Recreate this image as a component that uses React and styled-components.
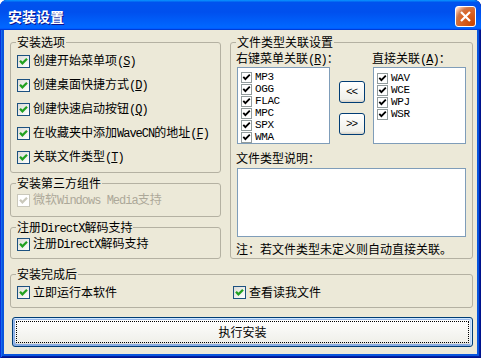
import React from "react"
import styled, { createGlobalStyle } from "styled-components"

const GlobalStyle = createGlobalStyle`
  *, *::before, *::after { box-sizing: border-box; }
  html, body { margin: 0; padding: 0; background: #fff; }
  body {
    font-family: "Noto Sans CJK SC", "Liberation Sans", sans-serif;
    font-size: 12px;
    color: #000;
  }
`

const Window = styled.div`
  width: 481px;
  height: 358px;
  display: flex;
  flex-direction: column;
  background: #0855dd;
  border-radius: 7px 7px 0 0;
  overflow: hidden;
  box-shadow: inset 1px 0 #0831d9, inset -1px 0 #00138c, inset 0 -1px #00138c,
    inset 2px 0 #166aee, inset -2px 0 #001ea0, inset 0 -2px #001ea0;
`

const TitleBar = styled.div`
  height: 30px;
  flex: none;
  display: flex;
  align-items: center;
  justify-content: space-between;
  padding: 2px 5px 0 8px;
  background: linear-gradient(180deg, #0997ff, #0053ee 8%, #0050ee 40%, #0066ff 88%, #0066ff 93%, #005bff 95%, #003dd7 96%, #003dd7);
`

const Title = styled.span`
  color: #fff;
  font-weight: bold;
  font-size: 14px;
  letter-spacing: 0;
  line-height: 14px;
  text-shadow: 1px 1px #0f1089;
`

const Close = styled.button`
  width: 21px;
  height: 21px;
  padding: 0;
  display: flex;
  align-items: center;
  justify-content: center;
  border: 1px solid #fff;
  border-radius: 3px;
  background: radial-gradient(circle at 90% 90%, #cc4600 0%, #dc6527 55%, #cd7546 70%, #ffccb2 90%, #fff 100%);
`

const Body = styled.div`
  flex: 1;
  margin: 0 4px 4px;
  padding: 6px 4px 7px 6px;
  background: #ece9d8;
  display: flex;
  flex-direction: column;
`

const TopRow = styled.div`
  display: grid;
  grid-template-columns: 211px 243px;
  column-gap: 9px;
`

const LeftCol = styled.div`
  display: flex;
  flex-direction: column;
  gap: 4px;
`

const Group = styled.fieldset`
  margin: 0;
  min-width: 0;
  padding: ${p => p.$pad || "0 6px 3px"};
  border: 1px solid #b4b1a2;
  border-radius: 3px;
`

const Legend = styled.legend`
  padding: 0 1px;
  margin-left: -1px;
  height: 12px;
  line-height: 12px;
  font-size: 12px;
`

const Row = styled.label`
  display: flex;
  align-items: center;
  gap: 3px;
  height: ${p => p.$h || 24}px;
  line-height: 12px;
  white-space: nowrap;
  color: ${p => (p.$disabled ? "#aca899" : "#000")};
`

const Stack = styled.div`
  padding-top: ${p => p.$top || 0}px;
`

const Box = styled.span`
  flex: none;
  width: 13px;
  height: 13px;
  display: flex;
  align-items: center;
  justify-content: center;
  border: 1px solid ${p => (p.$disabled ? "#cac8bb" : "#1c5180")};
  background: ${p => (p.$disabled ? "#fff" : "linear-gradient(135deg, #dcdcd7, #ffffff)")};
`

const Latin = styled.span`
  font-family: "Liberation Mono", monospace;
  font-size: 12px;
  letter-spacing: -1px;
`

const RightGroup = styled(Group)`
  display: flex;
  flex-direction: column;
`

const Assoc = styled.div`
  display: grid;
  grid-template-columns: 93px 43px 93px;
  grid-template-rows: 12px 77px;
  row-gap: 3px;
  margin-top: 4px;
`

const Caption = styled.div`
  height: 12px;
  line-height: 12px;
  white-space: nowrap;
  margin-top: ${p => p.$top || 0}px;
  margin-left: -1px;
`

const List = styled.div`
  background: #fff;
  border: 1px solid #7f9db9;
  padding: 4px 0 0 3px;
  display: flex;
  flex-direction: column;
`

const Item = styled.div`
  height: 12px;
  display: flex;
  align-items: center;
  gap: 3px;
`

const SmallBox = styled.span`
  flex: none;
  width: 11px;
  height: 11px;
  display: flex;
  align-items: center;
  justify-content: center;
  border: 1px solid #919b9c;
  background: #fff;
`

const ItemText = styled.span`
  font-family: "Liberation Mono", monospace;
  font-size: 11px;
  letter-spacing: -0.4px;
  line-height: 11px;
`

const Arrows = styled.div`
  display: flex;
  flex-direction: column;
  align-items: center;
  gap: 10px;
  padding-top: 14px;
`

const XpButton = styled.button`
  position: relative;
  width: ${p => p.$w || "auto"};
  height: ${p => p.$h}px;
  padding: 0;
  border: 1px solid #003c74;
  border-radius: 3px;
  background: linear-gradient(180deg, #ffffff, #f0f0ea 86%, #d6d0c5);
  color: #000;
  font-family: inherit;
  font-size: 12px;
  line-height: 12px;
  display: flex;
  align-items: center;
  justify-content: center;
`

const ArrowText = styled.span`
  font-family: "Liberation Mono", monospace;
  font-size: 11px;
  letter-spacing: -1px;
`

const Memo = styled.div`
  height: 69px;
  margin-top: 4px;
  background: #fff;
  border: 1px solid #7f9db9;
`

const BottomGroup = styled(Group)`
  margin-top: 9px;
`

const TwoCol = styled.div`
  display: grid;
  grid-template-columns: 216px 1fr;
`

const Install = styled(XpButton)`
  margin: 9px 0 0 2px;
  box-shadow: inset -1px 1px #cee7ff, inset 1px 2px #98b8ea, inset -2px 2px #bcd4f6,
    inset 1px -1px #89ade4, inset 2px -2px #89ade4;
  &::after {
    content: "";
    position: absolute;
    inset: 3px;
    border: 1px dotted #000;
    border-radius: 1px;
  }
`

// split out ASCII runs so they get the narrow mono face; "&X" marks an underlined accelerator
const text = s =>
  s.split(/([\x20-\x7e]+)/).map((part, i) => {
    if (!part) return null
    if (/^[\x20-\x7e]+$/.test(part)) {
      const bits = part.split(/&(.)/)
      return <Latin key={i}>{bits.map((b, j) => (j % 2 ? <u key={j}>{b}</u> : b))}</Latin>
    }
    return part
  })

const Check = ({ disabled }) => (
  <Box $disabled={disabled}>
    <svg width="11" height="11" viewBox="0 0 11 11">
      <path d="M2 4.8 L4.4 7.3 L9 2.7" fill="none" stroke={disabled ? "#cac8bb" : "#21a121"} strokeWidth="2.3" />
    </svg>
  </Box>
)

const CheckItem = ({ label, disabled, h }) => (
  <Row $disabled={disabled} $h={h}>
    <Check disabled={disabled} />
    <span>{text(label)}</span>
  </Row>
)

const FileList = ({ items }) => (
  <List>
    {items.map(it => (
      <Item key={it}>
        <SmallBox>
          <svg width="9" height="9" viewBox="0 0 9 9">
            <path d="M1.3 3.8 L3.4 6.2 L7.8 1.6" fill="none" stroke="#000" strokeWidth="1.8" />
          </svg>
        </SmallBox>
        <ItemText>{it}</ItemText>
      </Item>
    ))}
  </List>
)

const options = [
  "创建开始菜单项(&S)",
  "创建桌面快捷方式(&D)",
  "创建快速启动按钮(&Q)",
  "在收藏夹中添加WaveCN的地址(&F)",
  "关联文件类型(&T)",
]

export default function App() {
  return (
    <>
      <GlobalStyle />
      <Window>
        <TitleBar>
          <Title>安装设置</Title>
          <Close aria-label="关闭">
            <svg width="13" height="13" viewBox="0 0 13 13">
              <path d="M2 2 L11 11 M11 2 L2 11" stroke="#fff" strokeWidth="2.2" />
            </svg>
          </Close>
        </TitleBar>
        <Body>
          <TopRow>
            <LeftCol>
              <Group>
                <Legend>安装选项</Legend>
                <Stack $top={1}>
                  {options.map(o => (
                    <CheckItem key={o} label={o} />
                  ))}
                </Stack>
              </Group>
              <Group $pad="0 6px 5px">
                <Legend>安装第三方组件</Legend>
                <CheckItem label="微软Windows Media支持" disabled h={22} />
              </Group>
              <Group>
                <Legend>{text("注册DirectX解码支持")}</Legend>
                <CheckItem label="注册DirectX解码支持" h={22} />
              </Group>
            </LeftCol>
            <RightGroup>
              <Legend>文件类型关联设置</Legend>
              <Assoc>
                <Caption>{text("右键菜单关联(&R)：")}</Caption>
                <span />
                <Caption>{text("直接关联(&A)：")}</Caption>
                <FileList items={["MP3", "OGG", "FLAC", "MPC", "SPX", "WMA"]} />
                <Arrows>
                  <XpButton $w="26px" $h={22}><ArrowText>&lt;&lt;</ArrowText></XpButton>
                  <XpButton $w="26px" $h={22}><ArrowText>&gt;&gt;</ArrowText></XpButton>
                </Arrows>
                <FileList items={["WAV", "WCE", "WPJ", "WSR"]} />
              </Assoc>
              <Caption $top={8}>文件类型说明：</Caption>
              <Memo />
              <Caption $top={6}>注：若文件类型未定义则自动直接关联。</Caption>
            </RightGroup>
          </TopRow>
          <BottomGroup>
            <Legend>安装完成后</Legend>
            <TwoCol>
              <CheckItem label="立即运行本软件" />
              <CheckItem label="查看读我文件" />
            </TwoCol>
          </BottomGroup>
          <Install $h={30}>执行安装</Install>
        </Body>
      </Window>
    </>
  )
}
